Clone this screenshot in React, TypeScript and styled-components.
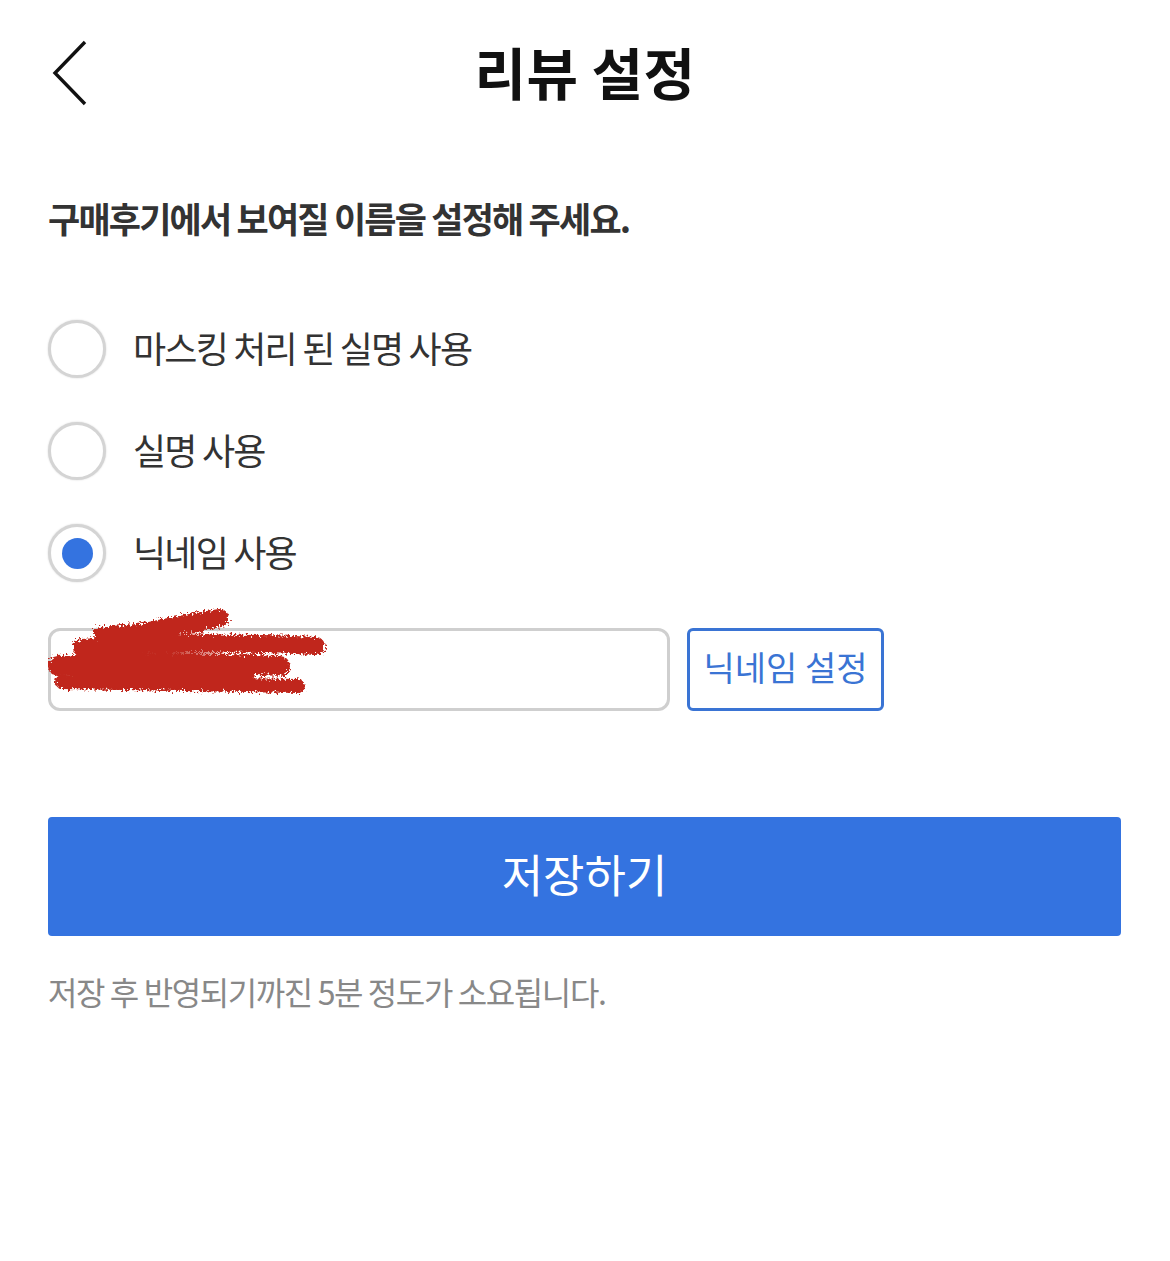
import React, { FC, useState } from "react";
import styled, { createGlobalStyle } from "styled-components";

const blue = "#3473e0";
const text = "#333333";

const GlobalStyle = createGlobalStyle`
  html, body {
    margin: 0;
    padding: 0;
    background: #ffffff;
  }
  body {
    font-family: "Noto Sans CJK KR", "Noto Sans", sans-serif;
    color: ${text};
  }
`;

const Page = styled.main`
  width: 1170px;
  min-height: 1261px;
  box-sizing: border-box;
  padding: 0 49px 0 48px;
  display: flex;
  flex-direction: column;
`;

const Header = styled.header`
  height: 146px;
  display: grid;
  grid-template-columns: 1fr auto 1fr;
  align-items: center;
  margin: 0 -49px 0 -48px;
`;

const BackButton = styled.button`
  justify-self: start;
  margin-left: 50px;
  width: 40px;
  height: 68px;
  padding: 0;
  border: none;
  background: none;
  display: flex;
  align-items: center;
  justify-content: center;
  cursor: pointer;
`;

const Title = styled.h1`
  margin: 0;
  font-size: 56px;
  font-weight: 700;
  line-height: 60px;
  letter-spacing: 0.4px;
  color: #111111;
  padding-bottom: 4px;
`;

const Lead = styled.p`
  margin: 52px 0 0;
  font-size: 35px;
  font-weight: 700;
  line-height: 40px;
  letter-spacing: -1.8px;
  color: ${text};
`;

const Options = styled.div`
  margin-top: 60px;
  display: flex;
  flex-direction: column;
`;

const Option = styled.label`
  height: 102px;
  display: flex;
  align-items: center;
  gap: 27px;
  cursor: pointer;
`;

const Circle = styled.span<{ $checked: boolean }>`
  width: 58px;
  height: 58px;
  box-sizing: border-box;
  border-radius: 50%;
  border: 3px solid #d4d4d4;
  box-shadow: 0 0 2px rgba(0, 0, 0, 0.18);
  background: #ffffff;
  display: flex;
  align-items: center;
  justify-content: center;
  flex-shrink: 0;

  &::after {
    content: "";
    width: 31px;
    height: 31px;
    border-radius: 50%;
    background: ${blue};
    display: ${(p) => (p.$checked ? "block" : "none")};
  }
`;

const OptionText = styled.span`
  font-size: 36px;
  line-height: 40px;
  letter-spacing: -1.8px;
  color: ${text};
  padding-bottom: 4px;
`;

const NickRow = styled.div`
  margin-top: 24px;
  display: flex;
  gap: 17px;
  height: 83px;
`;

const InputWrap = styled.div`
  position: relative;
  width: 622px;
`;

const NickInput = styled.input`
  width: 100%;
  height: 100%;
  box-sizing: border-box;
  border: 3px solid #cfcfcf;
  border-radius: 12px;
  padding: 0 24px;
  font-family: inherit;
  font-size: 32px;
  color: ${text};
  outline: none;
`;

const Scribble = styled.svg`
  position: absolute;
  left: 0;
  top: -20px;
  pointer-events: none;
`;

const NickButton = styled.button`
  width: 197px;
  height: 83px;
  box-sizing: border-box;
  border: 3px solid #3a74d4;
  border-radius: 6px;
  background: #ffffff;
  color: #3a74d4;
  font-family: inherit;
  font-size: 34px;
  letter-spacing: 0;
  padding: 0 0 6px;
  cursor: pointer;
`;

const SaveButton = styled.button`
  margin-top: 106px;
  height: 119px;
  width: 100%;
  border: none;
  border-radius: 4px;
  background: ${blue};
  color: #ffffff;
  font-family: inherit;
  font-size: 45px;
  letter-spacing: 0;
  padding: 0 0 6px;
  cursor: pointer;
`;

const Note = styled.p`
  margin: 35px 0 0;
  font-size: 32px;
  line-height: 40px;
  letter-spacing: -1.4px;
  color: #888888;
`;

const options = ["마스킹 처리 된 실명 사용", "실명 사용", "닉네임 사용"];

const App: FC = () => {
  const [selected, setSelected] = useState(2);

  return (
    <>
      <GlobalStyle />
      <Page>
        <Header>
          <BackButton aria-label="뒤로">
            <svg width="38" height="66" viewBox="0 0 38 66">
              <path d="M34 2 L4 33 L34 64" fill="none" stroke="#111" strokeWidth="3.4" />
            </svg>
          </BackButton>
          <Title>리뷰 설정</Title>
          <span />
        </Header>

        <Lead>구매후기에서 보여질 이름을 설정해 주세요.</Lead>

        <Options>
          {options.map((label, i) => (
            <Option key={label} onClick={() => setSelected(i)}>
              <Circle $checked={selected === i} />
              <OptionText>{label}</OptionText>
            </Option>
          ))}
        </Options>

        <NickRow>
          <InputWrap>
            <NickInput defaultValue="" aria-label="닉네임" />
            {/* redaction scribble over the nickname value */}
            <Scribble width="300" height="100" viewBox="0 0 300 100">
              <defs>
                <filter id="rough" x="-10%" y="-30%" width="120%" height="160%">
                  <feTurbulence type="fractalNoise" baseFrequency="0.45" numOctaves="2" result="n" />
                  <feDisplacementMap in="SourceGraphic" in2="n" scale="10" />
                </filter>
              </defs>
              <g filter="url(#rough)" stroke="#c0271c" strokeLinecap="round" fill="none">
                <path d="M62 32 Q120 18 172 10" strokeWidth="18" />
                <path d="M52 26 L150 18" strokeWidth="14" />
                <path d="M34 40 Q150 32 268 38" strokeWidth="18" />
                <path d="M10 58 Q110 52 232 58" strokeWidth="20" />
                <path d="M14 74 L250 78" strokeWidth="14" />
                <path d="M30 64 L200 66" strokeWidth="14" />
              </g>
            </Scribble>
          </InputWrap>
          <NickButton>닉네임 설정</NickButton>
        </NickRow>

        <SaveButton>저장하기</SaveButton>

        <Note>저장 후 반영되기까진 5분 정도가 소요됩니다.</Note>
      </Page>
    </>
  );
};

export default App;
